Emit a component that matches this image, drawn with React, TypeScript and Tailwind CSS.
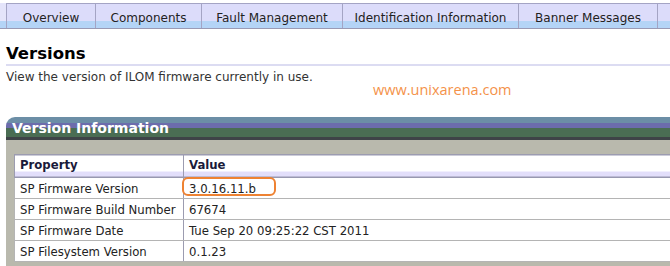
export default function App() {
  const tabs = [
    { label: 'Overview', w: 'w-[89px]' },
    { label: 'Components', w: 'w-[106px]' },
    { label: 'Fault Management', w: 'w-[141px]' },
    { label: 'Identification Information', w: 'w-[176px]' },
    { label: 'Banner Messages', w: 'w-[139px]' },
  ]

  const rows = [
    ['SP Firmware Version', '3.0.16.11.b'],
    ['SP Firmware Build Number', '67674'],
    ['SP Firmware Date', 'Tue Sep 20 09:25:22 CST 2011'],
    ['SP Filesystem Version', '0.1.23'],
  ]

  return (
    <div className="w-[670px] h-[266px] overflow-hidden bg-white font-['DejaVu_Sans',sans-serif] text-[#222]">
      {/* Tabs */}
      <div className="flex h-[29px] pt-[3px] border-b border-[#9a9ab4] bg-white">
        <div className="w-[6px] bg-[linear-gradient(to_bottom,#e4e4fa_0,#e4e4fa_18px,#b4d4f6_18px)]" />
        {tabs.map((t) => (
          <div
            key={t.label}
            className={`${t.w} shrink-0 border-l border-t border-[#a4a4c4] bg-[linear-gradient(to_bottom,#dcdcfa_0,#dcdcfa_17px,#b4d4f6_17px)] text-center text-[12px] leading-[14px] pt-[7px] text-[#222]`}
          >
            {t.label}
          </div>
        ))}
        <div className="flex-1 border-l border-t border-[#a4a4c4] bg-[linear-gradient(to_bottom,#dcdcfa_0,#dcdcfa_17px,#b4d4f6_17px)]" />
      </div>

      {/* Heading */}
      <div className="pl-[6px] pt-[15px]">
        <h1 className="text-[16.5px] font-bold leading-[20px] text-black">Versions</h1>
        <div className="h-[2px] bg-[#dcdcf2]" />
        <p className="text-[12px] leading-[14px] mt-[4px] text-[#333]">
          View the version of ILOM firmware currently in use.
        </p>
        <div className="h-[14px] -mt-[6px] pl-[367px]">
          <span className="font-['Open_Sans',sans-serif] text-[14.5px] leading-[14px] text-[#f4924a]">
            www.unixarena.com
          </span>
        </div>
      </div>

      {/* Panel */}
      <div className="ml-[6px] mt-[25px] rounded-tl-[9px] overflow-hidden">
        <div className="relative">
          <div className="h-[6px] bg-[#6c8ea6]" />
          <div className="h-[5px] bg-[#6c6cac]" />
          <div className="h-[9px] bg-[#4a6d53]" />
          <div className="h-[3px] bg-[#3e4347]" />
          <div className="absolute left-[6px] top-[3px] text-white font-bold text-[14px] leading-[17px]">
            Version Information
          </div>
        </div>
        <div className="bg-[#b9b9ad] pt-[14px] pl-[8px] pb-[6px]">
          <table className="w-full border-collapse bg-white text-[11.7px] text-[#222]">
            <thead>
              <tr className="h-[23px]">
                <th className="w-[169px] text-left font-bold text-[#1a1a3a] pl-[5px] border-l border-t border-r border-[#9c9cb0] bg-[linear-gradient(to_bottom,#ffffff_0,#ffffff_16px,#e2defa_16px,#e2defa_21px,#9898b0_21px)] align-top pt-[3px] leading-[14px]">
                  Property
                </th>
                <th className="text-left font-bold text-[#1a1a3a] pl-[5px] border-t border-[#9c9cb0] bg-[linear-gradient(to_bottom,#ffffff_0,#ffffff_16px,#e2defa_16px,#e2defa_21px,#9898b0_21px)] align-top pt-[3px] leading-[14px]">
                  Value
                </th>
              </tr>
            </thead>
            <tbody>
              {rows.map(([k, v], i) => (
                <tr key={k} className="h-[21px]">
                  <td className="pl-[5px] pt-[2px] border-l border-r border-b border-[#b4b4b4] border-r-[#9c9cb0] leading-[14px]">
                    {k}
                  </td>
                  <td className="pl-[5px] pt-[2px] border-b border-[#b4b4b4] leading-[14px]">
                    {i === 0 ? (
                      <span className="relative inline-block">
                        {v}
                        <span className="absolute left-[-7px] top-[-5px] w-[94px] h-[19px] rounded-[6px] border-2 border-[#ee8232]" />
                      </span>
                    ) : (
                      v
                    )}
                  </td>
                </tr>
              ))}
            </tbody>
          </table>
        </div>
      </div>
    </div>
  )
}
